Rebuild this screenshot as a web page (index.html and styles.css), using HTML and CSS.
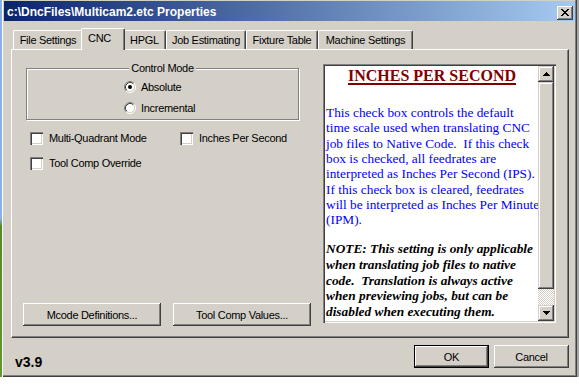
FILE: index.html
```html
<!DOCTYPE html>
<html>
<head>
<meta charset="utf-8">
<link rel="stylesheet" href="styles.css">
</head>
<body>
<div class="screen">
  <div class="desk"></div>
  <div class="window">
    <div class="titlebar">
      <span class="title">c:\DncFiles\Multicam2.etc Properties</span>
      <div class="close">
        <svg width="8" height="7" viewBox="0 0 8 7" shape-rendering="crispEdges">
          <rect x="0" y="0" width="2" height="1"/><rect x="6" y="0" width="2" height="1"/>
          <rect x="1" y="1" width="2" height="1"/><rect x="5" y="1" width="2" height="1"/>
          <rect x="2" y="2" width="4" height="1"/>
          <rect x="3" y="3" width="2" height="1"/>
          <rect x="2" y="4" width="4" height="1"/>
          <rect x="1" y="5" width="2" height="1"/><rect x="5" y="5" width="2" height="1"/>
          <rect x="0" y="6" width="2" height="1"/><rect x="6" y="6" width="2" height="1"/>
        </svg>
      </div>
    </div>

    <div class="tabs">
      <div class="tab tab-file">File Settings</div>
      <div class="tab tab-active">CNC</div>
      <div class="tab tab-hpgl">HPGL</div>
      <div class="tab tab-job">Job Estimating</div>
      <div class="tab tab-fix">Fixture Table</div>
      <div class="tab tab-mach">Machine Settings</div>
    </div>

    <div class="panel">
      <div class="left">
        <div class="group">
          <div class="legend">Control Mode</div>
          <div class="radios">
            <div class="radio-row">
              <svg class="radio" width="12" height="12" viewBox="0 0 12 12">
                <circle cx="6" cy="6" r="4.5" fill="#fff"/>
                <path d="M2.11 9.89 A5.5 5.5 0 0 1 9.89 2.11" fill="none" stroke="#808080"/>
                <path d="M9.89 2.11 A5.5 5.5 0 0 1 2.11 9.89" fill="none" stroke="#fff"/>
                <path d="M2.82 9.18 A4.5 4.5 0 0 1 9.18 2.82" fill="none" stroke="#404040"/>
                <path d="M9.18 2.82 A4.5 4.5 0 0 1 2.82 9.18" fill="none" stroke="#d4d0c8"/>
                <circle cx="6" cy="6" r="2" fill="#000"/>
              </svg>
              <span>Absolute</span>
            </div>
            <div class="radio-row">
              <svg class="radio" width="12" height="12" viewBox="0 0 12 12">
                <circle cx="6" cy="6" r="4.5" fill="#fff"/>
                <path d="M2.11 9.89 A5.5 5.5 0 0 1 9.89 2.11" fill="none" stroke="#808080"/>
                <path d="M9.89 2.11 A5.5 5.5 0 0 1 2.11 9.89" fill="none" stroke="#fff"/>
                <path d="M2.82 9.18 A4.5 4.5 0 0 1 9.18 2.82" fill="none" stroke="#404040"/>
                <path d="M9.18 2.82 A4.5 4.5 0 0 1 2.82 9.18" fill="none" stroke="#d4d0c8"/>
              </svg>
              <span>Incremental</span>
            </div>
          </div>
        </div>

        <div class="check-row">
          <div class="check check-first"><span class="box"></span><span>Multi-Quadrant Mode</span></div>
          <div class="check"><span class="box"></span><span>Inches Per Second</span></div>
        </div>
        <div class="check-row">
          <div class="check"><span class="box"></span><span>Tool Comp Override</span></div>
        </div>

        <div class="actions">
          <div class="btn btn-wide">Mcode Definitions...</div>
          <div class="btn btn-wide">Tool Comp Values...</div>
        </div>
      </div>

      <div class="help">
        <div class="help-text">
          <h1 class="help-title">INCHES PER SECOND</h1>
          <p class="desc">This check box controls the default<br>time scale used when translating CNC<br>job files to Native Code.&nbsp; If this check<br>box is checked, all feedrates are<br>interpreted as Inches Per Second (IPS).<br>If this check box is cleared, feedrates<br>will be interpreted as Inches Per Minute<br>(IPM).</p>
          <p class="note">NOTE: This setting is only applicable<br>when translating job files to native<br>code.&nbsp; Translation is always active<br>when previewing jobs, but can be<br>disabled when executing them.</p>
        </div>
        <div class="scrollbar">
          <div class="sb-btn">
            <svg width="7" height="4" viewBox="0 0 7 4" shape-rendering="crispEdges">
              <rect x="3" y="0" width="1" height="1"/><rect x="2" y="1" width="3" height="1"/>
              <rect x="1" y="2" width="5" height="1"/><rect x="0" y="3" width="7" height="1"/>
            </svg>
          </div>
          <div class="sb-thumb"></div>
          <div class="sb-track"></div>
          <div class="sb-btn">
            <svg width="7" height="4" viewBox="0 0 7 4" shape-rendering="crispEdges">
              <rect x="0" y="0" width="7" height="1"/><rect x="1" y="1" width="5" height="1"/>
              <rect x="2" y="2" width="3" height="1"/><rect x="3" y="3" width="1" height="1"/>
            </svg>
          </div>
        </div>
      </div>
    </div>

    <div class="footer">
      <div class="version">v3.9</div>
      <div class="btn btn-ok">OK</div>
      <div class="btn btn-cancel">Cancel</div>
    </div>
  </div>
  <div class="edge"></div>
</div>
</body>
</html>
```

FILE: styles.css
```css
html, body {
  margin: 0;
  background: #fff;
}
body {
  width: 579px;
  height: 384px;
  overflow: hidden;
  font-family: "Liberation Sans", Arial, sans-serif;
  font-size: 11px;
  color: #000;
}
.screen {
  display: flex;
  height: 377px;
}
.desk {
  width: 2px;
  background: linear-gradient(#8ab0ec 0, #8ab0ec 58%, #4f8c24 60%, #5e9a2c 100%);
}
.edge {
  flex: 1;
  background: #a8a8a8;
}
.window {
  width: 575px;
  box-sizing: border-box;
  background: #d4d0c8;
  box-shadow: inset 1px 0 #fff, inset -1px -1px #404040, inset -2px -2px #808080;
  padding: 1px 2px 2px 2px;
  display: flex;
  flex-direction: column;
}

/* title bar */
.titlebar {
  height: 20px;
  flex: none;
  background: linear-gradient(90deg, #0a246a, #a6caf0);
  display: flex;
  align-items: flex-start;
  justify-content: space-between;
  padding: 0 2px 0 3px;
}
.title {
  margin-top: 4px;
  color: #fff;
  font-weight: bold;
  font-size: 12px;
  line-height: 14px;
  white-space: nowrap;
}
.close {
  margin-top: 5px;
  width: 16px;
  height: 14px;
  box-sizing: border-box;
  background: #d4d0c8;
  box-shadow: inset -1px -1px #404040, inset 1px 1px #fff, inset -2px -2px #808080;
  display: flex;
  padding: 3px 0 0 4px;
}
.close svg { display: block; }

/* tabs */
.tabs {
  display: flex;
  align-items: flex-end;
  height: 21px;
  margin: 7px 0 0 9px;
  position: relative;
  z-index: 2;
}
.tab {
  box-sizing: border-box;
  height: 19px;
  border: 1px solid #fff;
  border-bottom: none;
  border-right-color: #404040;
  border-radius: 2px 2px 0 0;
  box-shadow: inset -1px 0 #808080;
  background: #d4d0c8;
  text-align: center;
  padding-top: 3px;
  line-height: 13px;
  letter-spacing: -0.3px;
  white-space: nowrap;
}
.tab-file { width: 70px; }
.tab-hpgl { width: 43px; }
.tab-job { width: 80px; }
.tab-fix { width: 72px; }
.tab-mach { width: 95px; }
.tab-active {
  width: 44px;
  height: 22px;
  margin: 0 -2px -1px;
  padding-right: 7px;
  position: relative;
  z-index: 3;
}

/* panel */
.panel {
  margin-left: 7px;
  width: 558px;
  height: 289px;
  flex: none;
  box-sizing: border-box;
  border-top: 1px solid #fff;
  border-left: 1px solid #fff;
  border-right: 1px solid #404040;
  border-bottom: 1px solid #404040;
  box-shadow: inset -1px -1px #808080;
  display: flex;
  gap: 12px;
  padding: 14px 12px 11px 11px;
}
.left {
  width: 288px;
  display: flex;
  flex-direction: column;
  letter-spacing: -0.3px;
}
.group {
  margin: 4px 0 0 3px;
  width: 273px;
  height: 52px;
  box-sizing: border-box;
  border: 1px solid #808080;
  box-shadow: inset 1px 1px #fff, 1px 1px #fff;
}
.legend {
  width: fit-content;
  margin: -7px auto 0;
  padding: 0 2px;
  background: #d4d0c8;
  line-height: 13px;
}
.radios {
  display: flex;
  flex-direction: column;
  gap: 1px;
  padding: 2px 0 0 97px;
}
.radio-row {
  height: 20px;
  display: flex;
  align-items: center;
  gap: 5px;
}
.radio { display: block; flex: none; }

.check-row {
  display: flex;
  margin: 12px 0 0 7px;
  height: 13px;
  line-height: 13px;
}
.check {
  display: flex;
  align-items: center;
  gap: 6px;
  white-space: nowrap;
}
.check-first { width: 150px; }
.box {
  width: 13px;
  height: 13px;
  box-sizing: border-box;
  background: #fff;
  box-shadow: inset 1px 1px #808080, inset 2px 2px #404040, inset -1px -1px #fff, inset -2px -2px #d4d0c8;
  flex: none;
}

.actions {
  margin-top: auto;
  display: flex;
  gap: 12px;
}
.btn {
  box-sizing: border-box;
  height: 23px;
  background: #d4d0c8;
  box-shadow: inset -1px -1px #404040, inset 1px 1px #fff, inset -2px -2px #808080;
  display: flex;
  align-items: center;
  justify-content: center;
  letter-spacing: -0.3px;
  white-space: nowrap;
}
.btn-wide { width: 138px; }

/* help */
.help {
  width: 233px;
  height: 259px;
  align-self: flex-start;
  box-sizing: border-box;
  display: flex;
  background: #fff;
  box-shadow: inset 1px 1px #808080, inset 2px 2px #404040, inset -1px -1px #fff, inset -2px -2px #d4d0c8;
  padding: 2px;
}
.help-text {
  flex: 1;
  padding: 1px 0 0 1px;
  overflow: hidden;
  white-space: nowrap;
  font-family: "Liberation Serif", "Times New Roman", serif;
}
.help-title {
  margin: 0;
  font-size: 16px;
  line-height: 18px;
  font-weight: bold;
  color: #800000;
  text-align: center;
  text-decoration: underline;
  text-decoration-thickness: 2px;
  text-underline-offset: 2px;
}
.desc {
  margin: 20px 0 0;
  font-size: 13.33px;
  line-height: 15.33px;
  color: #0000ff;
}
.note {
  margin: 13.33px 0 0;
  font-size: 13.33px;
  line-height: 15.8px;
  font-weight: bold;
  font-style: italic;
  color: #000;
}
.scrollbar {
  width: 16px;
  display: flex;
  flex-direction: column;
}
.sb-btn {
  height: 16px;
  flex: none;
  background: #d4d0c8;
  box-shadow: inset -1px -1px #404040, inset 1px 1px #d4d0c8, inset -2px -2px #808080, inset 2px 2px #fff;
  display: flex;
  align-items: center;
  justify-content: center;
}
.sb-btn svg { display: block; }
.sb-thumb {
  flex: 1;
  background: #d4d0c8;
  box-shadow: inset -1px -1px #404040, inset 1px 1px #d4d0c8, inset -2px -2px #808080, inset 2px 2px #fff;
}
.sb-track {
  height: 16px;
  flex: none;
  background: repeating-conic-gradient(#d4d0c8 0 25%, #fff 0 50%) 0 0 / 2px 2px;
}

/* footer */
.footer {
  display: flex;
  align-items: flex-start;
  padding: 0 6px 0 11px;
}
.version {
  margin-top: 16px;
  font-weight: bold;
  font-size: 14px;
  line-height: 16px;
}
.btn-ok {
  margin: 7px 0 0 auto;
  width: 75px;
  box-shadow: inset 0 0 0 1px #000, inset -2px -2px #404040, inset 2px 2px #fff, inset -3px -3px #808080;
}
.btn-cancel {
  margin: 7px 0 0 5px;
  width: 75px;
}
```
